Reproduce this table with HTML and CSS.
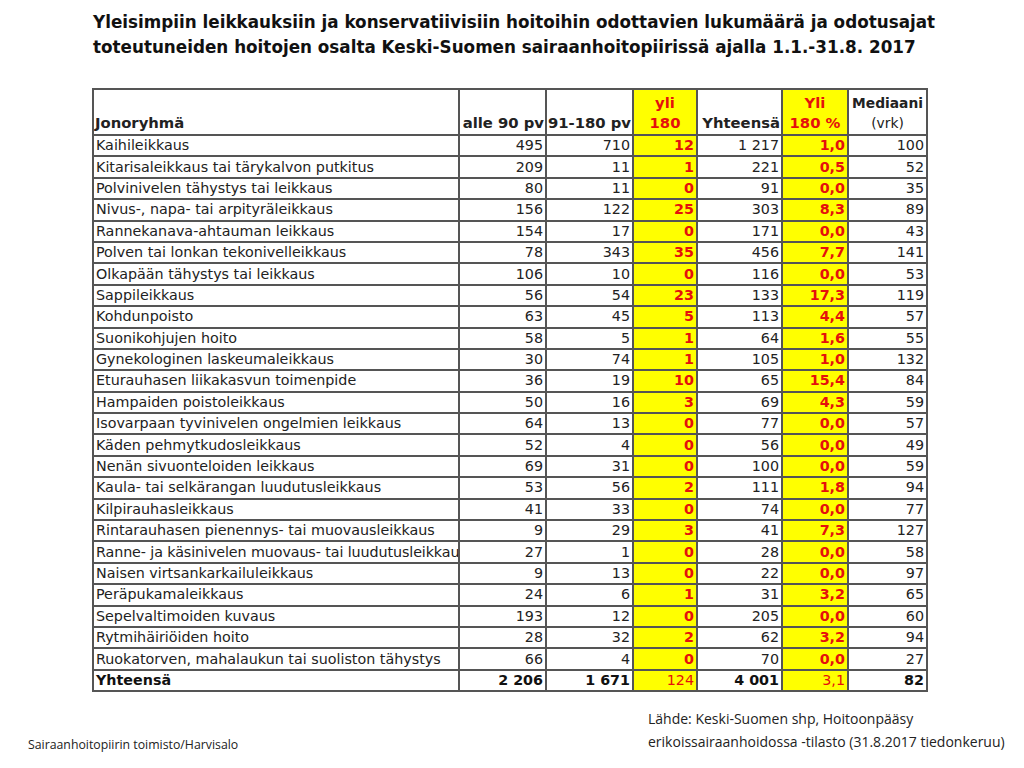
FILE: index.html
```html
<!DOCTYPE html>
<html lang="fi">
<head>
<meta charset="utf-8">
<title>Odotusajat</title>
<link rel="stylesheet" href="styles.css">
</head>
<body>
<div class="page">
  <h1 class="title">Yleisimpiin leikkauksiin ja konservatiivisiin hoitoihin odottavien lukumäärä ja odotusajat<br>toteutuneiden hoitojen osalta Keski-Suomen sairaanhoitopiirissä ajalla 1.1.-31.8. 2017</h1>
  <table class="grid">
    <colgroup>
      <col class="c-name"><col class="c-a"><col class="c-b"><col class="c-y"><col class="c-t"><col class="c-p"><col class="c-m">
    </colgroup>
    <thead>
      <tr>
        <th class="name">Jonoryhmä</th>
        <th>alle 90 pv</th>
        <th>91-180 pv</th>
        <th class="hl red">yli<br>180</th>
        <th>Yhteensä</th>
        <th class="hl red">Yli<br>180 %</th>
        <th class="med">Mediaani<br><span class="unit">(vrk)</span></th>
      </tr>
    </thead>
    <tbody>
      <tr><td class="name">Kaihileikkaus</td><td>495</td><td>710</td><td class="hl red">12</td><td>1 217</td><td class="hl red">1,0</td><td>100</td></tr>
      <tr><td class="name">Kitarisaleikkaus tai tärykalvon putkitus</td><td>209</td><td>11</td><td class="hl red">1</td><td>221</td><td class="hl red">0,5</td><td>52</td></tr>
      <tr><td class="name">Polvinivelen tähystys tai leikkaus</td><td>80</td><td>11</td><td class="hl red">0</td><td>91</td><td class="hl red">0,0</td><td>35</td></tr>
      <tr><td class="name">Nivus-, napa- tai arpityräleikkaus</td><td>156</td><td>122</td><td class="hl red">25</td><td>303</td><td class="hl red">8,3</td><td>89</td></tr>
      <tr><td class="name">Rannekanava-ahtauman leikkaus</td><td>154</td><td>17</td><td class="hl red">0</td><td>171</td><td class="hl red">0,0</td><td>43</td></tr>
      <tr><td class="name">Polven tai lonkan tekonivelleikkaus</td><td>78</td><td>343</td><td class="hl red">35</td><td>456</td><td class="hl red">7,7</td><td>141</td></tr>
      <tr><td class="name">Olkapään tähystys tai leikkaus</td><td>106</td><td>10</td><td class="hl red">0</td><td>116</td><td class="hl red">0,0</td><td>53</td></tr>
      <tr><td class="name">Sappileikkaus</td><td>56</td><td>54</td><td class="hl red">23</td><td>133</td><td class="hl red">17,3</td><td>119</td></tr>
      <tr><td class="name">Kohdunpoisto</td><td>63</td><td>45</td><td class="hl red">5</td><td>113</td><td class="hl red">4,4</td><td>57</td></tr>
      <tr><td class="name">Suonikohjujen hoito</td><td>58</td><td>5</td><td class="hl red">1</td><td>64</td><td class="hl red">1,6</td><td>55</td></tr>
      <tr><td class="name">Gynekologinen laskeumaleikkaus</td><td>30</td><td>74</td><td class="hl red">1</td><td>105</td><td class="hl red">1,0</td><td>132</td></tr>
      <tr><td class="name">Eturauhasen liikakasvun toimenpide</td><td>36</td><td>19</td><td class="hl red">10</td><td>65</td><td class="hl red">15,4</td><td>84</td></tr>
      <tr><td class="name">Hampaiden poistoleikkaus</td><td>50</td><td>16</td><td class="hl red">3</td><td>69</td><td class="hl red">4,3</td><td>59</td></tr>
      <tr><td class="name">Isovarpaan tyvinivelen ongelmien leikkaus</td><td>64</td><td>13</td><td class="hl red">0</td><td>77</td><td class="hl red">0,0</td><td>57</td></tr>
      <tr><td class="name">Käden pehmytkudosleikkaus</td><td>52</td><td>4</td><td class="hl red">0</td><td>56</td><td class="hl red">0,0</td><td>49</td></tr>
      <tr><td class="name">Nenän sivuonteloiden leikkaus</td><td>69</td><td>31</td><td class="hl red">0</td><td>100</td><td class="hl red">0,0</td><td>59</td></tr>
      <tr><td class="name">Kaula- tai selkärangan luudutusleikkaus</td><td>53</td><td>56</td><td class="hl red">2</td><td>111</td><td class="hl red">1,8</td><td>94</td></tr>
      <tr><td class="name">Kilpirauhasleikkaus</td><td>41</td><td>33</td><td class="hl red">0</td><td>74</td><td class="hl red">0,0</td><td>77</td></tr>
      <tr><td class="name">Rintarauhasen pienennys- tai muovausleikkaus</td><td>9</td><td>29</td><td class="hl red">3</td><td>41</td><td class="hl red">7,3</td><td>127</td></tr>
      <tr><td class="name tight">Ranne- ja käsinivelen muovaus- tai luudutusleikkaus</td><td>27</td><td>1</td><td class="hl red">0</td><td>28</td><td class="hl red">0,0</td><td>58</td></tr>
      <tr><td class="name">Naisen virtsankarkailuleikkaus</td><td>9</td><td>13</td><td class="hl red">0</td><td>22</td><td class="hl red">0,0</td><td>97</td></tr>
      <tr><td class="name">Peräpukamaleikkaus</td><td>24</td><td>6</td><td class="hl red">1</td><td>31</td><td class="hl red">3,2</td><td>65</td></tr>
      <tr><td class="name">Sepelvaltimoiden kuvaus</td><td>193</td><td>12</td><td class="hl red">0</td><td>205</td><td class="hl red">0,0</td><td>60</td></tr>
      <tr><td class="name">Rytmihäiriöiden hoito</td><td>28</td><td>32</td><td class="hl red">2</td><td>62</td><td class="hl red">3,2</td><td>94</td></tr>
      <tr><td class="name">Ruokatorven, mahalaukun tai suoliston tähystys</td><td>66</td><td>4</td><td class="hl red">0</td><td>70</td><td class="hl red">0,0</td><td>27</td></tr>
    </tbody>
    <tfoot>
      <tr><td class="name">Yhteensä</td><td>2 206</td><td>1 671</td><td class="hl red">124</td><td>4 001</td><td class="hl red">3,1</td><td>82</td></tr>
    </tfoot>
  </table>
  <div class="footer">
    <p class="credit">Sairaanhoitopiirin toimisto/Harvisalo</p>
    <p class="source">Lähde: Keski-Suomen shp, Hoitoonpääsy<br>erikoissairaanhoidossa -tilasto (31.8.2017 tiedonkeruu)</p>
  </div>
</div>
</body>
</html>
```

FILE: styles.css
```css
html, body {
  margin: 0;
  padding: 0;
  background: #ffffff;
}

.page {
  width: 1024px;
  height: 768px;
  box-sizing: border-box;
  padding-top: 10px;
  font-family: "DejaVu Sans", "Liberation Sans", sans-serif;
  color: #111;
}

.title {
  margin: 0 0 28px 93px;
  font-size: 16.8px;
  line-height: 25px;
  font-weight: bold;
  color: #111;
  white-space: nowrap;
}

.grid {
  margin-left: 92px;
  width: 834px;
  table-layout: fixed;
  border-collapse: collapse;
  border: 2px solid #444;
  font-size: 14.3px;
}

.c-name { width: 366px; }
.c-a { width: 87px; }
.c-b { width: 87px; }
.c-y { width: 64px; }
.c-t { width: 85px; }
.c-p { width: 66px; }
.c-m { width: 79px; }

.grid th,
.grid td {
  border: 2px solid #555;
  padding: 0 2px;
  height: 19.4px;
  line-height: 19px;
  text-align: right;
  white-space: nowrap;
  overflow: hidden;
  color: #222;
}

.grid th {
  height: 43px;
  line-height: 20px;
  vertical-align: bottom;
  font-weight: bold;
  font-size: 14.8px;
  padding: 0 1px 1px;
}

.grid th.name,
.grid td.name {
  text-align: left;
  text-overflow: clip;
}

.grid td.tight {
  letter-spacing: -0.1px;
}

.grid th.med {
  text-align: center;
  font-size: 13.8px;
  padding: 0 0 1px;
}

.grid th.med .unit {
  font-weight: normal;
}

.grid th.hl {
  text-align: center;
}

.grid .hl {
  background: #ffff00;
}

.grid .red {
  color: #e5100c;
  font-weight: bold;
}

.grid tfoot td {
  font-weight: bold;
  color: #111;
}

.grid tfoot td.red {
  color: #e5100c;
  font-weight: normal;
}

.footer {
  display: grid;
  grid-template-columns: 620px auto;
  align-items: end;
  padding-left: 28px;
  margin-top: 15px;
  color: #222;
  font-family: "Open Sans", "Liberation Sans", sans-serif;
}

.credit {
  margin: 0 0 0 0;
  font-size: 12.3px;
  line-height: 16px;
  white-space: nowrap;
}

.source {
  margin: 0;
  font-size: 14px;
  line-height: 23px;
  white-space: nowrap;
}
```
